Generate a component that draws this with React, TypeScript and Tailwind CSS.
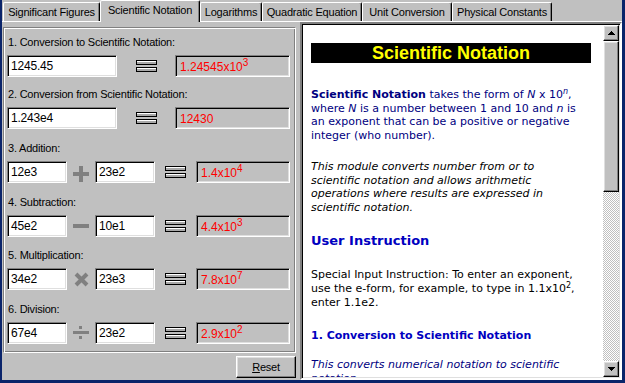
import React from "react";

const sunken =
  "border border-t-[#808080] border-l-[#808080] border-r-white border-b-white shadow-[inset_1px_1px_0_#000,inset_-1px_-1px_0_#dfdfdf]";
const raised =
  "border border-t-white border-l-white border-r-black border-b-black shadow-[inset_-1px_-1px_0_#808080,inset_1px_1px_0_#dfdfdf]";

function Equals() {
  return (
    <svg width="21" height="12" viewBox="0 0 21 12" shapeRendering="crispEdges">
      {[0, 7].map((y) => (
        <g key={y}>
          <rect x="0" y={y} width="21" height="5" fill="#000" />
          <rect x="1" y={y + 1} width="19" height="1" fill="#ffffff" />
          <rect x="1" y={y + 2} width="19" height="2" fill="#a8a8a8" />
        </g>
      ))}
    </svg>
  );
}

function Plus() {
  return (
    <svg width="16" height="16" viewBox="0 0 16 16" shapeRendering="crispEdges">
      <rect x="6" y="0" width="4" height="16" fill="#808080" />
      <rect x="0" y="6" width="16" height="4" fill="#808080" />
    </svg>
  );
}

function Minus() {
  return (
    <svg width="16" height="16" viewBox="0 0 16 16" shapeRendering="crispEdges">
      <rect x="0" y="6" width="16" height="4" fill="#808080" />
    </svg>
  );
}

function Times() {
  return (
    <svg width="15" height="15" viewBox="0 0 15 15">
      <path d="M2 2 L13 13 M13 2 L2 13" stroke="#808080" strokeWidth="4" />
    </svg>
  );
}

function Divide() {
  return (
    <svg width="16" height="14" viewBox="0 0 16 14" shapeRendering="crispEdges">
      <rect x="6" y="0" width="3" height="3" fill="#808080" />
      <rect x="0" y="5" width="16" height="3" fill="#808080" />
      <rect x="6" y="10" width="3" height="3" fill="#808080" />
    </svg>
  );
}

function Input({ value, w }: { value: string; w: string }) {
  return (
    <div className={`${sunken} ${w} h-[22px] bg-white pl-[3px] pt-[3px] text-[12px] leading-[14px]`}>
      {value}
    </div>
  );
}

function Result({ base, exp, w }: { base: string; exp?: string; w: string }) {
  return (
    <div
      className={`${sunken} ${w} h-[22px] bg-[#c0c0c0] pl-[4px] pt-[4px] text-[12px] leading-[14px] tracking-normal text-[#ff0000]`}
    >
      {base}
      {exp && <span className="relative -top-[5px] text-[10px]">{exp}</span>}
    </div>
  );
}

function Tab({ label, w, active }: { label: string; w: string; active?: boolean }) {
  if (active) {
    return (
      <div
        className={`${w} h-[22px] relative z-10 bg-[#c0c0c0] border-l border-t border-white border-r border-r-black shadow-[inset_-1px_0_0_#808080] rounded-t-[2px] text-center pt-[2px] leading-[14px]`}
      >
        {label}
      </div>
    );
  }
  return (
    <div
      className={`${w} h-[19px] mt-[2px] border-l border-t border-white border-r border-r-black shadow-[inset_-1px_0_0_#808080] rounded-t-[2px] text-center pt-[2px] leading-[14px]`}
    >
      {label}
    </div>
  );
}

function Label({ children, mt }: { children: React.ReactNode; mt: string }) {
  return <div className={`${mt} ml-[1px] h-[13px] leading-[13px] mb-[6px]`}>{children}</div>;
}

function OpRow({
  a,
  b,
  op,
  res,
  exp,
}: {
  a: string;
  b: string;
  op: React.ReactNode;
  res: string;
  exp: string;
}) {
  return (
    <div className="flex items-center h-[22px]">
      <Input value={a} w="w-[60px]" />
      <div className="w-[28px] flex justify-center">{op}</div>
      <Input value={b} w="w-[60px]" />
      <div className="w-[41px] flex justify-center">
        <Equals />
      </div>
      <Result base={res} exp={exp} w="w-[94px]" />
    </div>
  );
}

export default function App() {
  return (
    <div className="w-[625px] h-[383px] bg-[#0a246a] pl-[2px] pr-[3px] pb-[3px] font-['Liberation_Sans',Arial,sans-serif] text-[11px] tracking-[-0.2px] text-black">
      <div className="w-[620px] h-[380px] bg-[#c0c0c0] flex flex-col">
        {/* Tabs */}
        <div className="h-[21px] flex items-start pl-[1px]">
          <Tab label="Significant Figures" w="w-[97px]" />
          <Tab label="Scientific Notation" w="w-[100px]" active />
          <Tab label="Logarithms" w="w-[62px]" />
          <Tab label="Quadratic Equation" w="w-[100px]" />
          <Tab label="Unit Conversion" w="w-[90px]" />
          <Tab label="Physical Constants" w="w-[100px]" />
        </div>
        {/* Body */}
        <div className="flex flex-1 border-t border-white">
          {/* Left */}
          <div className="w-[298px] flex flex-col pl-[1px] pt-[5px]">
            <div className="w-[293px] h-[326px] border border-t-[#808080] border-l-[#808080] border-r-white border-b-white shadow-[inset_1px_1px_0_#fff,inset_-1px_-1px_0_#808080] pl-[3px] pt-[8px] flex flex-col">
              <Label mt="mt-0">1. Conversion to Scientific Notation:</Label>
              <div className="flex items-center h-[22px]">
                <Input value="1245.45" w="w-[110px]" />
                <div className="w-[58px] flex justify-center">
                  <Equals />
                </div>
                <Result base="1.24545x10" exp="3" w="w-[115px]" />
              </div>
              <Label mt="mt-[11px]">2. Conversion from Scientific Notation:</Label>
              <div className="flex items-center h-[22px]">
                <Input value="1.243e4" w="w-[110px]" />
                <div className="w-[58px] flex justify-center">
                  <Equals />
                </div>
                <Result base="12430" w="w-[115px]" />
              </div>
              <Label mt="mt-[13px]">3. Addition:</Label>
              <OpRow a="12e3" b="23e2" op={<div className="mt-[4px]"><Plus /></div>} res="1.4x10" exp="4" />
              <Label mt="mt-[13px]">4. Subtraction:</Label>
              <OpRow a="45e2" b="10e1" op={<Minus />} res="4.4x10" exp="3" />
              <Label mt="mt-[12px]">5. Multiplication:</Label>
              <OpRow a="34e2" b="23e3" op={<Times />} res="7.8x10" exp="7" />
              <Label mt="mt-[13px]">6. Division:</Label>
              <OpRow a="67e4" b="23e2" op={<Divide />} res="2.9x10" exp="2" />
            </div>
            <div className="flex justify-end pr-[4px] mt-[3px]">
              <div className={`${raised} w-[60px] h-[22px] text-center leading-[20px]`}>
                <span className="underline">R</span>eset
              </div>
            </div>
          </div>
          {/* Right */}
          <div className="w-[322px] h-[358px] border-2 border-t-[#808080] border-l-[#808080] border-r-white border-b-white shadow-[inset_1px_1px_0_#000,inset_-1px_-1px_0_#dfdfdf] p-[1px] flex">
            <div className="flex-1 bg-white overflow-hidden pl-[8px] pt-[18px] font-['DejaVu_Sans',Verdana,sans-serif] tracking-normal text-[11px] whitespace-nowrap">
              <div className="w-[280px] h-[20px] bg-black text-[#ffff00] text-center font-['Liberation_Sans',Arial,sans-serif] font-bold text-[18px] leading-[20px]">
                Scientific Notation
              </div>
              <div className="mt-[25px] leading-[13.5px] text-[#000080]">
                <span className="font-bold">Scientific Notation</span> takes the form of <i>N</i> x 10
                <sup className="text-[8px] italic">n</sup>,
                <br />
                where <i>N</i> is a number between 1 and 10 and <i>n</i> is
                <br />
                an exponent that can be a positive or negative
                <br />
                integer (who number).
              </div>
              <div className="mt-[18px] leading-[13.5px] italic text-black">
                This module converts number from or to
                <br />
                scientific notation and allows arithmetic
                <br />
                operations where results are expressed in
                <br />
                scientific notation.
              </div>
              <div className="mt-[18px] leading-[17px] font-bold text-[13px] text-[#0000c0]">
                User Instruction
              </div>
              <div className="mt-[19px] leading-[14px] text-black">
                Special Input Instruction: To enter an exponent,
                <br />
                use the e-form, for example, to type in 1.1x10
                <sup className="text-[8px]">2</sup>,
                <br />
                enter 1.1e2.
              </div>
              <div className="mt-[19px] leading-[14px] font-bold text-[#0000c0]">
                1. Conversion to Scientific Notation
              </div>
              <div className="mt-[15px] leading-[14px] italic text-[#000080]">
                This converts numerical notation to scientific
                <br />
                notation
              </div>
            </div>
            {/* Scrollbar */}
            <div className="w-[16px] flex flex-col">
              <div className={`${raised} h-[16px] flex items-center justify-center`}>
                <svg width="7" height="4" viewBox="0 0 7 4" shapeRendering="crispEdges">
                  <path d="M3 0h1v1h1v1h1v1h1v1H0V3h1V2h1V1h1z" fill="#000" />
                </svg>
              </div>
              <div className={`${raised} h-[151px] bg-[#c0c0c0]`} />
              <div className="flex-1 bg-[repeating-conic-gradient(#c0c0c0_0_25%,#ffffff_0_50%)] bg-[length:2px_2px]" />
              <div className={`${raised} h-[16px] flex items-center justify-center`}>
                <svg width="7" height="4" viewBox="0 0 7 4" shapeRendering="crispEdges">
                  <path d="M0 0h7v1H6v1H5v1H4v1H3V3H2V2H1V1H0z" fill="#000" />
                </svg>
              </div>
            </div>
          </div>
        </div>
      </div>
    </div>
  );
}
